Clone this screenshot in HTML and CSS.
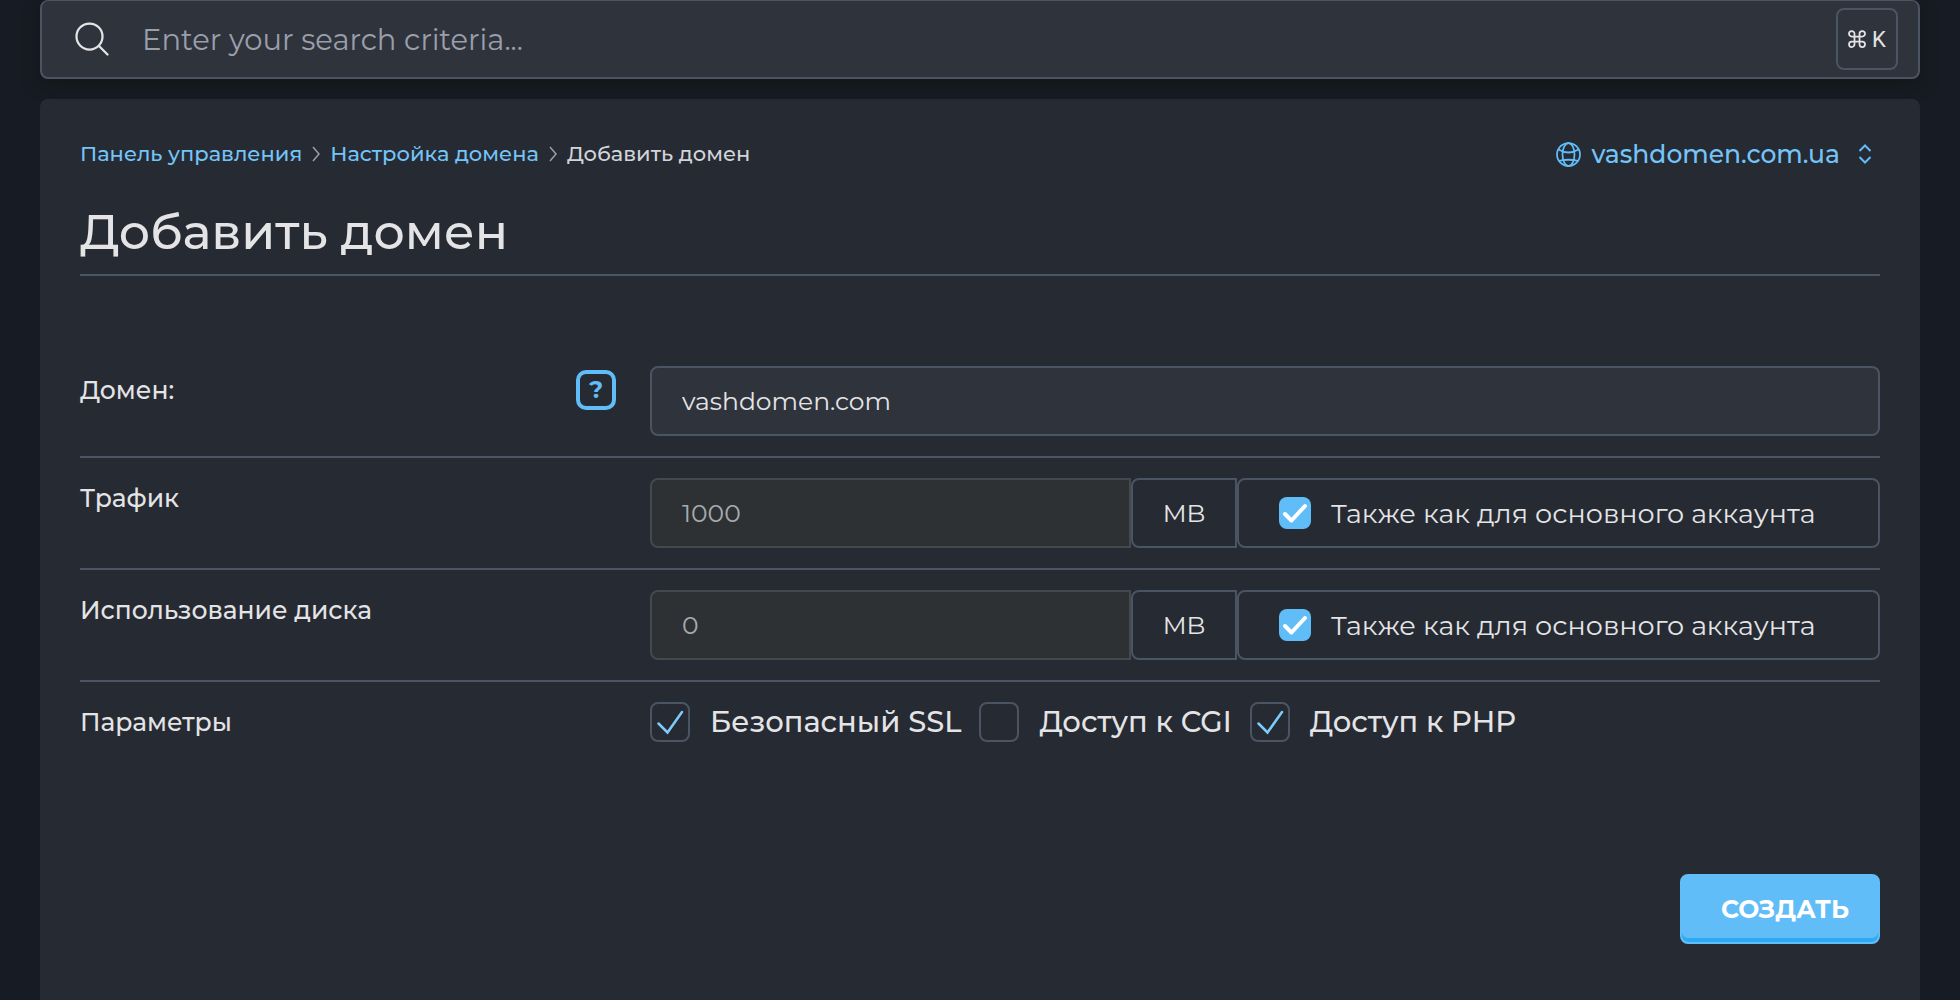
FILE: index.html
```html
<!DOCTYPE html>
<html lang="ru">
<head>
<meta charset="utf-8">
<meta name="viewport" content="width=device-width, initial-scale=1">
<title>Добавить домен</title>
<link rel="stylesheet" href="styles.css">
</head>
<body>
<div class="page">
  <form class="search" role="search">
    <label class="search-icon" for="search" aria-label="Search">
      <svg width="34" height="34" viewBox="0 0 34 34" fill="none" stroke="currentColor" stroke-width="2.250" stroke-linecap="round"><circle cx="14.500" cy="14.500" r="13"/><path d="M24 24l8.500 8.500"/></svg>
    </label>
    <input class="search-input" id="search" type="search" placeholder="Enter your search criteria...">
    <kbd class="shortcut"><svg width="18" height="18" viewBox="0 0 18 18" fill="none" stroke="currentColor" stroke-width="1.750"><path d="M6.500 6.500H3.750a2.750 2.750 0 1 1 2.750-2.750V14.250a2.750 2.750 0 1 1-2.750-2.750H14.250a2.750 2.750 0 1 1-2.750 2.750V3.750A2.750 2.750 0 1 1 14.250 6.500H6"/></svg><span>K</span></kbd>
  </form>

  <main class="panel">
    <div class="topline">
      <nav class="crumbs" aria-label="Breadcrumb">
        <a href="#">Панель управления</a>
        <svg width="8" height="16" viewBox="0 0 8 16" fill="none" stroke="currentColor" stroke-width="1.500"><path d="M1 1l6 7-6 7"/></svg>
        <a href="#">Настройка домена</a>
        <svg width="8" height="16" viewBox="0 0 8 16" fill="none" stroke="currentColor" stroke-width="1.500"><path d="M1 1l6 7-6 7"/></svg>
        <span>Добавить домен</span>
      </nav>
      <button class="domain-switch" type="button">
        <svg width="25" height="25" viewBox="0 0 25 25" fill="none" stroke="currentColor" stroke-width="1.750"><circle cx="12.500" cy="12.500" r="11.500"/><ellipse cx="12.500" cy="12.500" rx="6" ry="11.500"/><path d="M2.500 7.500Q12.500 13.500 22.500 7.500M2.500 19Q12.500 16.500 22.500 19"/></svg>
        <span>vashdomen.com.ua</span>
        <svg width="14" height="20" viewBox="0 0 14 20" fill="none" stroke="currentColor" stroke-width="2"><path d="M1.500 7L7 1.500 12.500 7M1.500 13L7 18.500 12.500 13"/></svg>
      </button>
    </div>
    <h1 class="title">Добавить домен</h1>

    <form class="form">
      <div class="row">
        <div class="row-label has-help"><label for="domain">Домен:</label><button class="help" type="button">?</button></div>
        <input class="field" id="domain" type="text" value="vashdomen.com">
      </div>
      <div class="row">
        <div class="row-label"><label for="traffic">Трафик</label></div>
        <div class="group">
          <input class="field" id="traffic" type="text" value="1000" disabled>
          <span class="unit">MB</span>
          <label class="same"><input class="check solid" type="checkbox" checked><span>Также как для основного аккаунта</span></label>
        </div>
      </div>
      <div class="row">
        <div class="row-label"><label for="disk">Использование диска</label></div>
        <div class="group">
          <input class="field" id="disk" type="text" value="0" disabled>
          <span class="unit">MB</span>
          <label class="same"><input class="check solid" type="checkbox" checked><span>Также как для основного аккаунта</span></label>
        </div>
      </div>
      <div class="row">
        <div class="row-label" id="options">Параметры</div>
        <div class="options" role="group" aria-labelledby="options">
          <label><input class="check" type="checkbox" checked><span>Безопасный SSL</span></label>
          <label><input class="check" type="checkbox"><span>Доступ к CGI</span></label>
          <label><input class="check" type="checkbox" checked><span>Доступ к PHP</span></label>
        </div>
      </div>
      <div class="actions"><button class="submit" type="submit">СОЗДАТЬ</button></div>
    </form>
  </main>
</div>
</body>
</html>
```
FILE: styles.css
```css
:root {
  --bg: #171b23;
  --panel: #262a32;
  --field: #2f333c;
  --line: #4b5463;
  --text: #e4e4e6;
  --accent: #61bdf8;
  --link: #74c4f8;
}

* { box-sizing: border-box; }

body {
  margin: 0;
  background: var(--bg);
  color: var(--text);
  font-family: Montserrat, Inter, "Noto Sans", sans-serif;
  font-size: 25px;
}

input, button, kbd { font: inherit; color: inherit; }
svg { flex: none; }

.page {
  display: flex;
  flex-direction: column;
  gap: 20px;
  min-height: 100vh;
  padding: 0 40px;
}

.search {
  display: flex;
  align-items: center;
  height: 79px;
  padding: 0 20px 0 33px;
  background: var(--field);
  border: 2px solid var(--line);
  border-top-width: 1px;
  border-radius: 8px;
  box-shadow: 0 6px 16px #14171a;
}
.search-icon { display: flex; }
.search-input {
  flex: 1;
  min-width: 0;
  height: 60px;
  padding: 0 33px;
  border: 0;
  outline: 0;
  background: none;
  font-size: 29px;
}
.search-input::placeholder { color: #9a9fab; opacity: 1; }
.shortcut {
  display: flex;
  align-items: center;
  justify-content: center;
  gap: 6px;
  width: 62px;
  height: 62px;
  border: 2px solid var(--line);
  border-radius: 8px;
  font-family: Roboto, sans-serif;
  font-size: 22px;
}

.panel {
  flex: 1;
  padding: 35px 40px 56px;
  background: var(--panel);
  border-radius: 8px 8px 0 0;
}
.topline {
  display: flex;
  align-items: center;
  justify-content: space-between;
  height: 40px;
}
.crumbs {
  display: flex;
  align-items: center;
  gap: 10px;
  color: #9a9fab;
  font-size: 21px;
  font-weight: 500;
  line-height: 24px;
}
.crumbs a { color: var(--link); text-decoration: none; }
.crumbs span { color: #d2d4da; }
.domain-switch {
  display: flex;
  align-items: center;
  gap: 10px;
  padding: 0 8px 0 0;
  border: 0;
  background: none;
  color: var(--accent);
  font-weight: 500;
}
.domain-switch span { margin-right: 8px; color: var(--link); }

.title {
  margin: 0;
  padding: 28px 0 12px;
  border-bottom: 2px solid var(--line);
  font-size: 49px;
  font-weight: 500;
  line-height: 60px;
}

.form { padding-top: 70px; }
.row {
  display: grid;
  grid-template-columns: 536px minmax(0, 1fr);
  column-gap: 34px;
  padding: 20px 0;
  border-bottom: 2px solid var(--line);
}
.row:nth-child(4) { border: 0; }
.row-label { font-weight: 500; line-height: 40px; }
.has-help {
  display: flex;
  align-items: center;
  justify-content: space-between;
  height: 48px;
}
.help {
  width: 40px;
  height: 40px;
  padding: 0;
  border: 4px solid var(--accent);
  border-radius: 10px;
  background: none;
  color: var(--accent);
  font-size: 24px;
  font-weight: 700;
  line-height: 32px;
}

.field {
  width: 100%;
  height: 70px;
  padding: 0 30px;
  background: var(--field);
  border: 2px solid var(--line);
  border-radius: 8px;
  outline: 0;
}
.group {
  display: grid;
  grid-template-columns: minmax(0, 1fr) 106px 643px;
}
.group .field {
  background: #2e3134;
  border-color: #45484d;
  border-radius: 8px 0 0 8px;
  color: #a8aaad;
}
.unit, .same {
  display: flex;
  align-items: center;
  border: 2px solid var(--line);
}
.unit { justify-content: center; border-radius: 8px 0 0 8px; }
.same {
  gap: 20px;
  padding-left: 40px;
  border-radius: 8px;
  font-size: 27px;
}

.check {
  appearance: none;
  flex: none;
  width: 40px;
  height: 40px;
  margin: 0;
  border: 2px solid var(--line);
  border-radius: 8px;
  background-position: center;
  background-repeat: no-repeat;
}
.check:checked {
  background-image: url("data:image/svg+xml,%3Csvg xmlns='http://www.w3.org/2000/svg' width='36' height='36' fill='none' stroke='%237ccbfb' stroke-width='2.500' stroke-linecap='round'%3E%3Cpath d='M6.500 19.500l9 9L30 8'/%3E%3C/svg%3E");
}
.check.solid {
  width: 32px;
  height: 32px;
  border: 0;
  background-color: var(--accent);
  background-image: url("data:image/svg+xml,%3Csvg xmlns='http://www.w3.org/2000/svg' width='32' height='32' fill='none' stroke='white' stroke-width='4' stroke-linecap='round' stroke-linejoin='round'%3E%3Cpath d='M6 17l6.500 6.500L26 9'/%3E%3C/svg%3E");
}
.options {
  display: flex;
  flex-wrap: wrap;
  gap: 18px;
  font-size: 29px;
  font-weight: 500;
  line-height: 42px;
}
.options label { display: flex; align-items: center; gap: 20px; height: 40px; }

.actions {
  display: flex;
  justify-content: flex-end;
  padding-top: 112px;
}
.submit {
  width: 200px;
  height: 70px;
  padding: 0 0 0 10px;
  border: 2px solid var(--accent);
  border-radius: 8px;
  background: var(--accent);
  box-shadow: inset 0 -4px #2eaaf5;
  color: #fff;
  font-weight: 700;
}
```
